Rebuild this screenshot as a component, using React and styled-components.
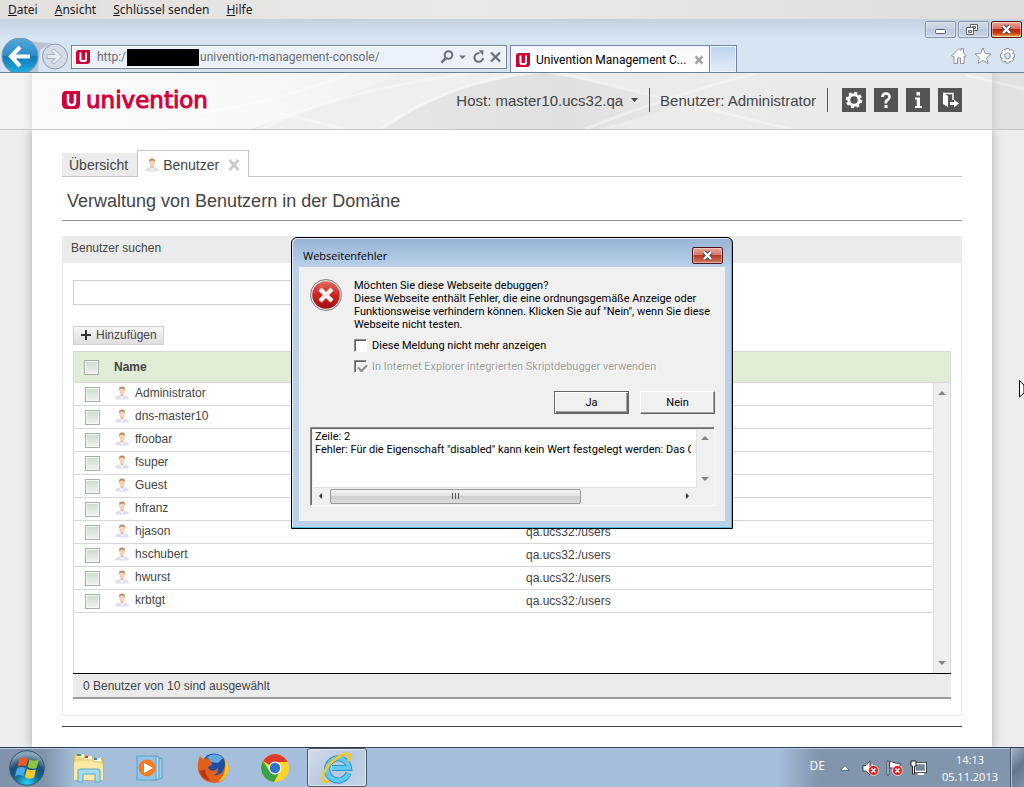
import React, { useState } from "react";
import styled, { createGlobalStyle } from "styled-components";

const users = [
  "Administrator",
  "dns-master10",
  "ffoobar",
  "fsuper",
  "Guest",
  "hfranz",
  "hjason",
  "hschubert",
  "hwurst",
  "krbtgt",
];

const errorText = 'Zeile: 2\nFehler: Für die Eigenschaft "disabled" kann kein Wert festgelegt werden: Das O';

function App() {
  return (
    <Screen>
      <GlobalStyle />
      <MenuBar />
      <BrowserChrome />
      <Viewport>
        <ConsoleHeader />
        <UserModule />
      </Viewport>
      <Taskbar />
      <Overlay>
        <ErrorDialog />
      </Overlay>
      <Cursor viewBox="0 0 5 18">
        <path d="M0.500 0.500V17L5 13V5Z" fill="#fff" stroke="#000" />
      </Cursor>
    </Screen>
  );
}

function MenuBar() {
  return (
    <Menu>
      {["Datei", "Ansicht", "Schlüssel senden", "Hilfe"].map((item) => (
        <MenuItem key={item}>
          <u>{item[0]}</u>
          {item.slice(1)}
        </MenuItem>
      ))}
    </Menu>
  );
}

function Favicon() {
  return (
    <svg width="14" height="14" viewBox="0 0 14 14">
      <path d="M3 0H14V11Q14 14 11 14H0V3Q0 0 3 0Z" fill="#cc0033" />
      <path d="M4.500 2.500V9.500Q4.500 11 6 11H8.500Q10 11 10 9.500V2.500" fill="none" stroke="#fff" strokeWidth="2" />
    </svg>
  );
}

function BrowserChrome() {
  return (
    <Chrome>
      <WindowButtons>
        <WindowButton aria-label="Minimieren">
          <svg width="31" height="15" viewBox="0 0 31 15">
            <rect x="10.500" y="7.500" width="10" height="4" rx="1" fill="#fff" stroke="#5a6068" />
          </svg>
        </WindowButton>
        <WindowButton aria-label="Wiederherstellen">
          <svg width="31" height="15" viewBox="0 0 31 15" fill="#fff" stroke="#5a6068">
            <path d="M12.500 2.500H19.500V8.500H12.500Z M14.500 4.500H17.500V6.500H14.500Z" fillRule="evenodd" />
            <path d="M8.500 5.500H15.500V12.500H8.500Z M10.500 8.500H13.500V10.500H10.500Z" fillRule="evenodd" />
          </svg>
        </WindowButton>
        <WindowButton $close aria-label="Schließen">
          <CloseGlyph />
        </WindowButton>
      </WindowButtons>
      <NavRow>
        <NavButton $width={40} aria-label="Zurück">
          <svg width="68" height="34" viewBox="0 0 68 34">
            <defs>
              <linearGradient id="back" x1="0" y1="0" x2="0" y2="1">
                <stop offset="0" stopColor="#55a8da" />
                <stop offset="0.480" stopColor="#2c8dca" />
                <stop offset="0.520" stopColor="#0f76b8" />
                <stop offset="1" stopColor="#22b4e4" />
              </linearGradient>
            </defs>
            <path d="M24 1Q34 5 52 5L40 12L38 34H30Z" fill="#b9c4d2" />
            <circle cx="20" cy="18" r="18" fill="url(#back)" stroke="#7f93a8" />
            <path d="M20 9L11 18.500L20 28M11 18.500H30" fill="none" stroke="#fff" strokeWidth="4" />
          </svg>
        </NavButton>
        <NavButton $width={31} aria-label="Vorwärts">
          <svg width="31" height="34" viewBox="0 0 31 34">
            <circle cx="15" cy="18.500" r="12.500" fill="#d3dce7" stroke="#8798ab" />
            <path
              d="M7 16.500H15L11.500 13L14 11L22 18.500L14 26L11.500 24L15 20.500H7Z"
              fill="#e9eef4"
              stroke="#a2afbd"
            />
          </svg>
        </NavButton>
        <AddressBar>
          <Favicon />
          <Url>
            http:/
            <Redacted />
            univention-management-console/
          </Url>
          <svg width="62" height="16" viewBox="0 0 62 16" fill="none" stroke="#6b6f76" strokeWidth="2">
            <circle cx="8.500" cy="6" r="3.800" />
            <path d="M6 9L1.500 13.500" strokeWidth="2.500" />
            <path d="M19 6.500H26L22.500 10Z" fill="#6b6f76" stroke="none" />
            <path d="M43 9A4.300 4.300 0 1 1 39.500 4.300" />
            <path d="M38.500 1L43.500 1.500L43 6.500Z" fill="#6b6f76" stroke="none" />
            <path d="M51 3.500L60 12.500M60 3.500L51 12.500" strokeWidth="2.200" />
          </svg>
        </AddressBar>
        <BrowserTab>
          <Favicon />
          <TabTitle>Univention Management C...</TabTitle>
          <svg width="10" height="10" viewBox="0 0 10 10">
            <path d="M1.500 1.500L8.500 8.500M8.500 1.500L1.500 8.500" stroke="#a3a3a3" strokeWidth="2.500" />
          </svg>
        </BrowserTab>
        <NewTab aria-label="Neue Registerkarte" />
        <ChromeTools>
          <svg width="66" height="18" viewBox="0 0 66 18" fill="#fff" stroke="#8d949d">
            <path d="M1.500 9L9 1.500L11 3.500V1.500H13.500V6L16.500 9L15 10.200L14 9.300V16.500H10.500V11H7.500V16.500H4V9.300L3 10.200Z" />
            <path d="M33 1L35.300 6.500L41 7L36.600 10.800L38 16.500L33 13.400L28 16.500L29.400 10.800L25 7L30.700 6.500Z" />
            <path d="M56 1.500H59L59.500 3.300L61.500 2.300L63.500 4.300L62.500 6.300L64.500 7V10.500L62.500 11L63.500 13L61.500 15L59.500 14.200L59 16H56L55.500 14.200L53.500 15L51.500 13L52.500 11L50.500 10.500V7L52.500 6.300L51.500 4.300L53.500 2.300L55.500 3.300Z" />
            <circle cx="57.500" cy="8.800" r="3" fill="#d6e3f1" />
          </svg>
        </ChromeTools>
      </NavRow>
    </Chrome>
  );
}

function CloseGlyph() {
  return (
    <svg width="13" height="11" viewBox="0 0 13 11">
      <path d="M3 2L10 9M10 2L3 9" stroke="#4b4a56" strokeWidth="4.500" />
      <path d="M3 2L10 9M10 2L3 9" stroke="#fff" strokeWidth="2.400" />
    </svg>
  );
}

function ConsoleHeader() {
  return (
    <Header>
      <HeaderBackdrop viewBox="0 0 1024 56" preserveAspectRatio="none">
        <defs>
          <linearGradient id="fade">
            <stop offset="0" stopColor="#fbfbfb" />
            <stop offset="0.250" stopColor="#f8f8f8" />
            <stop offset="0.500" stopColor="#ececec" />
            <stop offset="1" stopColor="#e9e9e9" />
          </linearGradient>
          <linearGradient id="slope">
            <stop offset="0" stopColor="#e6e6e6" />
            <stop offset="0.600" stopColor="#e0e0e0" />
            <stop offset="1" stopColor="#e9e9e9" />
          </linearGradient>
        </defs>
        <rect width="1024" height="56" fill="url(#fade)" />
        <path d="M250 56Q340 28 400 0H520Q450 22 385 56Z" fill="#efefef" />
        <path d="M385 56Q450 8 545 0Q620 12 690 30L600 56Z" fill="url(#slope)" />
        <path
          d="M200 40Q290 26 350 0M262 56Q330 20 470 0M380 56Q450 8 530 0M585 56Q670 22 757 0M280 40L345 56M560 0Q640 20 790 56M965 2L1024 16"
          fill="none"
          stroke="#fff"
          strokeOpacity="0.400"
          strokeWidth="3"
        />
      </HeaderBackdrop>
      <HeaderContent>
        <Logo href="#">
          <svg width="18" height="18" viewBox="0 0 18 18">
            <path d="M4 0H18V13Q18 18 13 18H5Q0 18 0 13V5Q0 0 4 0Z" fill="#d1003a" />
            <path d="M6 3V11Q6 14 9 14H10Q13 14 13 11V3" fill="none" stroke="#fff" strokeWidth="2.500" />
          </svg>
          univention
        </Logo>
        <HeaderItem>
          Host: master10.ucs32.qa
          <svg width="7" height="4" viewBox="0 0 7 4">
            <path d="M0 0H7L3.500 4Z" fill="#444" />
          </svg>
        </HeaderItem>
        <HeaderItem>Benutzer: Administrator</HeaderItem>
        <IconButton aria-label="Einstellungen">
          <svg width="24" height="24" viewBox="0 0 24 24">
            <circle cx="12" cy="12" r="5.200" fill="none" stroke="#fff" strokeWidth="3" />
            <circle cx="12" cy="12" r="7.200" fill="none" stroke="#fff" strokeWidth="2.200" strokeDasharray="3 2.655" />
          </svg>
        </IconButton>
        <IconButton aria-label="Hilfe">
          <svg width="24" height="24" viewBox="0 0 24 24">
            <path d="M8.500 9Q8.500 5.500 12 5.500T15.500 9Q15.500 11 13.500 12T12 15.500" fill="none" stroke="#fff" strokeWidth="2.600" />
            <rect x="10.500" y="17" width="3" height="3" fill="#fff" />
          </svg>
        </IconButton>
        <IconButton aria-label="Info">
          <svg width="24" height="24" viewBox="0 0 24 24" fill="#fff">
            <rect x="10.500" y="4" width="3.500" height="3.500" />
            <path d="M9 9.500H14V18H16V20H9V18H10.800V11.500H9Z" />
          </svg>
        </IconButton>
        <IconButton aria-label="Abmelden">
          <svg width="24" height="24" viewBox="0 0 24 24">
            <path d="M5 5L10 8V19L5 16Z" fill="#fff" />
            <path d="M5 5.500H15V12" fill="none" stroke="#fff" strokeWidth="1.500" />
            <path d="M12 14H16V11.500L21 15.500L16 19.500V17H12Z" fill="#fff" />
          </svg>
        </IconButton>
      </HeaderContent>
    </Header>
  );
}

function PersonIcon() {
  return (
    <svg width="14" height="14" viewBox="0 0 14 14">
      <path d="M0 13Q0 10.500 4 9.500L7 11L10 9.500Q14 10.500 14 13Q7 14.500 0 13Z" fill="#dcdff0" />
      <path d="M4.500 9.300L7 13L9.500 9.300Z" fill="#fff" />
      <path d="M5.500 7H8.500V9.500L7 11L5.500 9.500Z" fill="#e8b896" />
      <ellipse cx="7" cy="4.800" rx="2.700" ry="3.600" fill="#f6d3b6" />
      <path d="M4 4.800Q3.400 0.500 7 0.500T10 4.800L9.200 2.900Q7 2.300 4.800 2.900Z" fill="#b58a5f" />
    </svg>
  );
}

function UserModule() {
  return (
    <Main>
      <ModuleTabs>
        <ModuleTab>Übersicht</ModuleTab>
        <ModuleTab $active>
          <PersonIcon />
          Benutzer
          <svg width="12" height="12" viewBox="0 0 12 12">
            <path d="M1.500 1L10.500 11M10.500 1L1.500 11" stroke="#c9cbcd" strokeWidth="3" />
          </svg>
        </ModuleTab>
      </ModuleTabs>
      <ModuleTitle>Verwaltung von Benutzern in der Domäne</ModuleTitle>
      <Panel>
        <PanelTitle>Benutzer suchen</PanelTitle>
        <PanelBody>
          <SearchInput aria-label="Suche" />
          <AddButton>
            <svg width="10" height="10" viewBox="0 0 10 10">
              <path d="M5 0V10M0 5H10" stroke="#333" strokeWidth="2" />
            </svg>
            Hinzufügen
          </AddButton>
          <Grid>
            <UserTable>
              <colgroup>
                <col style={{ width: 40 }} />
                <col />
                <col style={{ width: 408 }} />
                <col style={{ width: 17 }} />
              </colgroup>
              <thead>
                <tr>
                  <th>
                    <GridCheck type="checkbox" aria-label="Alle auswählen" />
                  </th>
                  <th>Name</th>
                  <th>Position</th>
                  <th />
                </tr>
              </thead>
              <tbody>
                {users.map((name) => (
                  <tr key={name}>
                    <td>
                      <GridCheck type="checkbox" aria-label={name} />
                    </td>
                    <td>
                      <UserName>
                        <PersonIcon />
                        {name}
                      </UserName>
                    </td>
                    <td>qa.ucs32:/users</td>
                    <td />
                  </tr>
                ))}
              </tbody>
            </UserTable>
            <ScrollTrack>
              <Arrow />
              <Arrow $down />
            </ScrollTrack>
          </Grid>
          <GridStatus>0 Benutzer von 10 sind ausgewählt</GridStatus>
        </PanelBody>
      </Panel>
      <Divider />
    </Main>
  );
}

function Arrow({ $down }) {
  return (
    <svg width="8" height="4" viewBox="0 0 8 4">
      <path d={$down ? "M0 0H8L4 4Z" : "M0 4H8L4 0Z"} fill="#858585" />
    </svg>
  );
}

function ErrorDialog() {
  const [hide, setHide] = useState(false);

  return (
    <Dialog role="dialog" aria-label="Webseitenfehler">
      <DialogTitle>
        Webseitenfehler
        <DialogClose aria-label="Schließen">
          <CloseGlyph />
        </DialogClose>
      </DialogTitle>
      <DialogBody>
        <Message>
          <svg width="32" height="32" viewBox="0 0 32 32">
            <defs>
              <linearGradient id="error" x1="0" y1="0" x2="0" y2="1">
                <stop offset="0" stopColor="#e26a62" />
                <stop offset="0.500" stopColor="#cf2420" />
                <stop offset="1" stopColor="#a30c0c" />
              </linearGradient>
            </defs>
            <circle cx="16" cy="16" r="15.500" fill="#e8e8e8" stroke="#808080" />
            <circle cx="16" cy="16" r="13.800" fill="url(#error)" />
            <path d="M10 10L22 22M22 10L10 22" stroke="#f2f2f2" strokeWidth="4.500" />
          </svg>
          <div>
            Möchten Sie diese Webseite debuggen?
            <br />
            Diese Webseite enthält Fehler, die eine ordnungsgemäße Anzeige oder
            <br />
            Funktionsweise verhindern können. Klicken Sie auf "Nein", wenn Sie diese
            <br />
            Webseite nicht testen.
            <Option>
              <input type="checkbox" checked={hide} onChange={() => setHide(!hide)} />
              Diese Meldung nicht mehr anzeigen
            </Option>
            <Option $disabled>
              <input type="checkbox" checked disabled readOnly />
              In Internet Explorer integrierten Skriptdebugger verwenden
            </Option>
          </div>
        </Message>
        <DialogActions>
          <DialogButton $primary>Ja</DialogButton>
          <DialogButton>Nein</DialogButton>
        </DialogActions>
        <Details>
          <DetailsText readOnly wrap="off" aria-label="Details" value={errorText} />
          <DetailsTrack>
            <Arrow />
            <Arrow $down />
          </DetailsTrack>
          <DetailsBar>
            <svg width="4" height="8" viewBox="0 0 4 8">
              <path d="M4 1V7L1 4Z" fill="#333" />
            </svg>
            <Thumb>
              <svg width="9" height="6" viewBox="0 0 9 6">
                <path d="M1.500 0V6M4.500 0V6M7.500 0V6" stroke="#555" />
              </svg>
            </Thumb>
            <svg width="4" height="8" viewBox="0 0 4 8">
              <path d="M0 1V7L3 4Z" fill="#333" />
            </svg>
          </DetailsBar>
        </Details>
      </DialogBody>
    </Dialog>
  );
}

function Taskbar() {
  return (
    <Bar>
      <StartButton aria-label="Start">
        <svg width="36" height="36" viewBox="0 0 36 36">
          <defs>
            <radialGradient id="orb" cx="0.500" cy="0.950" r="0.850">
              <stop offset="0" stopColor="#25d3f5" />
              <stop offset="0.450" stopColor="#12658f" />
              <stop offset="0.700" stopColor="#1c4c70" />
              <stop offset="1" stopColor="#8aa6bd" />
            </radialGradient>
          </defs>
          <circle cx="18" cy="18" r="17.300" fill="url(#orb)" stroke="#31546f" />
          <path d="M10.500 9Q14 6 19 8.500L17 16.500Q12.500 14.500 8.500 17Z" fill="#ee5a24" />
          <path d="M20.500 9.300Q25 12 30 9.500L27.500 18Q23 20 18.500 17Z" fill="#8cc63f" />
          <path d="M8 18.500Q12 16 16.500 18L14.500 26Q10 24 6 26.500Z" fill="#4aa9e9" />
          <path d="M18 18.700Q22.500 21.500 27 19.500L25 27.500Q20 30 16 27Z" fill="#fdc82f" />
        </svg>
      </StartButton>
      <TaskButton aria-label="Explorer">
        <svg width="34" height="32" viewBox="0 0 34 32">
          <path d="M2 3H14V5H22V7H31V28H2Z" fill="#eed887" stroke="#c9a94f" />
          <path d="M2 10L14 9L31 12V28H2Z" fill="#fbe9a5" />
          <path d="M5 2H12V5H5Z" fill="#fff" />
          <path d="M5 2H9V4H5Z" fill="#35a853" />
          <path d="M13 4H20V7H13Z" fill="#fff" />
          <path d="M13 4H16V6H13Z" fill="#d83b2a" />
          <path d="M22 6H29V9H22Z" fill="#fff" />
          <path d="M22 6H25V8H22Z" fill="#2b8ad6" />
          <path d="M6 30V19Q6 17 8 17H26Q28 17 28 19V30H23V22H11V30Z" fill="#a4dcef" stroke="#5ba7c9" />
        </svg>
      </TaskButton>
      <TaskButton aria-label="Media Player">
        <svg width="30" height="28" viewBox="0 0 30 28">
          <path d="M20 3L26 5V24L20 26Z" fill="#9fd0ec" stroke="#5e9dc6" />
          <path d="M18 2L23 3V25L18 26Z" fill="#b6ddf2" stroke="#5e9dc6" />
          <rect x="1" y="2" width="19" height="24" fill="#8ec6e7" stroke="#5e9dc6" />
          <circle cx="11" cy="14" r="8.500" fill="#f47b20" />
          <path d="M8 9L17 14L8 19Z" fill="#fff" />
        </svg>
      </TaskButton>
      <TaskButton aria-label="Firefox">
        <svg width="32" height="32" viewBox="0 0 32 32">
          <circle cx="17" cy="14" r="12.500" fill="#1f4fa0" />
          <path d="M10 5Q18 -1 26 6L21 11L14 10Z" fill="#5fa8e0" />
          <path d="M3 4Q5 8 9 6Q15 8 15 13L12 14Q10 16 13 18Q18 20 21 16Q22 21 17 23Q24 24 27 17Q29 12 27 6Q34 14 31 21Q27 31 17 31Q4 30 1 18Q0 10 3 4Z" fill="#e0601c" />
          <path d="M27 6Q34 14 31 21Q28 28 21 30Q28 23 28 16Q29 11 27 6Z" fill="#fbc62c" />
          <path d="M2 18Q4 27 14 29Q8 24 8 17Q5 20 2 18Z" fill="#b83310" />
        </svg>
      </TaskButton>
      <TaskButton aria-label="Chrome">
        <svg width="30" height="30" viewBox="0 0 30 30">
          <circle cx="15" cy="15" r="14" fill="#fdd428" />
          <path d="M2.900 8A14 14 0 0 1 27.100 8L27.500 9H15L9.500 12Z" fill="#dc3b2c" />
          <path d="M2.900 8A14 14 0 0 0 14 29L20 18L9.500 18Z" fill="#3ba14a" />
          <circle cx="15" cy="15" r="6.500" fill="#fff" />
          <circle cx="15" cy="15" r="5.200" fill="#2f72c9" />
        </svg>
      </TaskButton>
      <TaskButton $active aria-label="Internet Explorer">
        <svg width="34" height="32" viewBox="0 0 34 32">
          <path d="M28.500 21A11 11 0 1 1 29 16H12" fill="none" stroke="#1f7fc0" strokeWidth="6" />
          <path d="M28.500 21A11 11 0 1 1 29 16H12" fill="none" stroke="#5ccaf4" strokeWidth="4.500" />
          <path d="M9 29Q1 32 3 24Q7 12 17 6Q28 -1 30 4Q30 7 28 9" fill="none" stroke="#f4c52c" strokeWidth="2.800" />
        </svg>
      </TaskButton>
      <Tray>
        <Language>DE</Language>
        <svg width="10" height="6" viewBox="0 0 10 6">
          <path d="M0.500 5.500L5 0.500L9.500 5.500Z" fill="#fff" stroke="#5b6b7d" />
        </svg>
        <TrayIcon viewBox="0 0 17 16">
          <path d="M1 5.500H4L8 1V15L4 11H1Z" fill="#fff" stroke="#3b4652" />
          <path d="M10 4Q12 8 10 12" fill="none" stroke="#fff" />
          <ErrorBadge />
        </TrayIcon>
        <TrayIcon viewBox="0 0 17 16">
          <path d="M1 1H3V15H1Z" fill="#fff" stroke="#3b4652" />
          <path d="M3.500 2Q6 1 8 2.500T14 3V9Q11 10 8 8.500T3.500 8.500Z" fill="#fff" stroke="#3b4652" />
          <ErrorBadge />
        </TrayIcon>
        <TrayIcon viewBox="0 0 17 16">
          <path d="M5 3.500H15.500V11.500H5Z" fill="#7187a0" stroke="#222" strokeWidth="3" />
          <path d="M5 3.500H15.500V11.500H5Z" fill="#7187a0" stroke="#fff" strokeWidth="1.300" />
          <path d="M8 14H14" stroke="#fff" strokeWidth="2" />
          <path d="M1 1H6V6H4.500V14H2.500V6H1Z" fill="#fff" stroke="#222" />
        </TrayIcon>
        <Clock>
          14:13
          <br />
          05.11.2013
        </Clock>
        <ShowDesktop aria-label="Desktop anzeigen" />
      </Tray>
    </Bar>
  );
}

function ErrorBadge() {
  return (
    <g>
      <circle cx="11.500" cy="10.500" r="5" fill="#d8231f" stroke="#fff" strokeWidth="0.700" />
      <path d="M9.500 8.500L13.500 12.500M13.500 8.500L9.500 12.500" stroke="#fff" strokeWidth="1.500" />
    </g>
  );
}

const GlobalStyle = createGlobalStyle`
  * {
    box-sizing: border-box;
  }

  body {
    margin: 0;
    font-family: "Liberation Sans", Arial, sans-serif;
    font-size: 12px;
    color: #444;
  }

  button, input, textarea {
    font: inherit;
    color: inherit;
    margin: 0;
    padding: 0;
  }

  svg {
    flex: none;
    display: block;
  }
`;

const Screen = styled.div`
  position: relative;
  display: flex;
  flex-direction: column;
  min-height: 100vh;
  overflow: hidden;
`;

const Menu = styled.nav`
  display: flex;
  align-items: center;
  gap: 17px;
  height: 19px;
  padding: 0 8px;
  background: linear-gradient(90deg, #e2dfdd, #ebe9e7 45%, #e0dcda);
  font-family: "Noto Sans", sans-serif;
  font-size: 12px;
  color: #1a1a1a;
`;

const MenuItem = styled.span`
  white-space: nowrap;
`;

const Chrome = styled.div`
  height: 54px;
  padding-top: 2px;
  background: linear-gradient(#c3d2e2, #d7e4f2 20px);
  border-bottom: 1px solid #6c8099;
`;

const WindowButtons = styled.div`
  display: flex;
  justify-content: flex-end;
  gap: 2px;
  padding-right: 2px;
`;

const WindowButton = styled.button`
  display: flex;
  align-items: center;
  justify-content: center;
  width: 31px;
  height: 17px;
  border: 1px solid ${(props) => (props.$close ? "#5e1414" : "#8292ab")};
  border-radius: 2px;
  box-shadow: inset 0 0 0 1px rgba(255, 255, 255, 0.45);
  background: ${(props) =>
    props.$close
      ? "linear-gradient(#eda79a, #dc6a55 45%, #c01f08 50%, #cf3a10 75%, #f0c060)"
      : "linear-gradient(#cfdbe9, #c3d0e0 45%, #b9c8da 50%, #cbd9e8)"};
`;

const NavRow = styled.div`
  display: flex;
  align-items: flex-end;
  height: 34px;
`;

const NavButton = styled.button`
  width: ${(props) => props.$width}px;
  height: 34px;
  border: 0;
  background: none;
`;

const AddressBar = styled.div`
  display: flex;
  flex: 1;
  align-items: center;
  height: 24px;
  margin: 0 3px 3px 0;
  padding: 0 4px;
  border: 1px solid #74859b;
  box-shadow: inset 0 0 0 1px #fff;
  background: #eaf1fa;
`;

const Url = styled.div`
  display: flex;
  flex: 1;
  align-items: center;
  margin-left: 7px;
  color: #6d6d6d;
  font-family: Roboto, sans-serif;
  white-space: nowrap;
`;

const Redacted = styled.span`
  width: 72px;
  height: 17px;
  margin: 0 1px;
  background: #000;
`;

const BrowserTab = styled.div`
  display: flex;
  align-items: center;
  gap: 6px;
  width: 200px;
  height: 27px;
  padding: 2px 5px 0;
  border: 1px solid #74859b;
  border-bottom: 0;
  background: linear-gradient(#f4f8fc, #fff 60%);
  color: #000;
  font-family: Roboto, sans-serif;
`;

const TabTitle = styled.span`
  flex: 1;
  white-space: nowrap;
`;

const NewTab = styled.button`
  width: 27px;
  height: 27px;
  border: 1px solid #74859b;
  border-width: 1px 1px 0 0;
  box-shadow: inset 0 0 0 1px #eef4fb;
  background: linear-gradient(#bcd3ed, #e3edf9);
`;

const ChromeTools = styled.div`
  display: flex;
  justify-content: flex-end;
  width: 287px;
  padding: 0 8px 7px 0;
`;

const Viewport = styled.div`
  display: flex;
  flex: 1;
  flex-direction: column;
  background: #ededed;
  overflow: hidden;
`;

const Header = styled.header`
  position: relative;
  z-index: 1;
  display: grid;
  height: 57px;
  border-bottom: 1px solid #c6c6c6;
  overflow: hidden;

  > * {
    grid-area: 1 / 1;
  }
`;

const HeaderBackdrop = styled.svg`
  width: 100%;
  height: 56px;
`;

const HeaderContent = styled.div`
  display: flex;
  align-items: center;
  gap: 10px;
  margin: 0 32px;
  padding: 0 30px 2px;
  box-shadow: 0 0 10px rgba(0, 0, 0, 0.15), 0 0 0 40px rgba(0, 0, 0, 0.03);
  color: #444;
  font-size: 15px;
`;

const Logo = styled.a`
  display: flex;
  align-items: center;
  gap: 6px;
  margin-right: auto;
  color: #d1003a;
  font-family: "DejaVu Sans", sans-serif;
  font-size: 23px;
  line-height: 24px;
  text-decoration: none;
  -webkit-text-stroke: 1px #d1003a;
`;

const HeaderItem = styled.div`
  display: flex;
  align-items: center;
  gap: 8px;
  height: 24px;
  padding-right: 11px;
  border-right: 1px solid #555;
  white-space: nowrap;
`;

const IconButton = styled.button`
  width: 24px;
  height: 24px;
  border: 0;
  background: #545456;

  ${HeaderItem} + & {
    margin-left: 4px;
  }

  & + & {
    margin-left: -2px;
  }
`;

const Main = styled.main`
  flex: 1;
  margin: 0 32px;
  padding: 20px 30px;
  background: #fff;
  box-shadow: 0 0 10px rgba(0, 0, 0, 0.3);
`;

const ModuleTabs = styled.div`
  display: flex;
  align-items: flex-end;
  height: 27px;
  border-bottom: 1px solid #c4c4c4;
`;

const ModuleTab = styled.button`
  display: flex;
  align-items: center;
  gap: 4px;
  height: ${(props) => (props.$active ? 27 : 23)}px;
  margin-bottom: ${(props) => (props.$active ? -1 : 0)}px;
  padding: ${(props) => (props.$active ? "2px 8px 0 7px" : "0 9px 0 7px")};
  border: ${(props) => (props.$active ? "1px solid #c4c4c4" : "0")};
  border-bottom: 0;
  background: ${(props) => (props.$active ? "#fff" : "#ebebeb")};
  font-size: 14px;

  svg:last-child:not(:first-child) {
    margin-left: 5px;
  }
`;

const ModuleTitle = styled.h1`
  height: 44px;
  margin: 0 0 15px;
  padding-left: 5px;
  border-bottom: 1px solid #8f8f8f;
  font-size: 18px;
  font-weight: normal;
  line-height: 48px;
`;

const Panel = styled.section`
  border: 1px solid #ebebeb;
`;

const PanelTitle = styled.h2`
  height: 26px;
  margin: 0;
  padding-left: 8px;
  background: #ebebeb;
  font-size: 12px;
  font-weight: normal;
  line-height: 22px;
`;

const PanelBody = styled.div`
  padding: 17px 10px 16px;
`;

const SearchInput = styled.input`
  display: block;
  width: 50%;
  height: 25px;
  margin-bottom: 21px;
  border: 1px solid #d0d0d0;
`;

const AddButton = styled.button`
  display: flex;
  align-items: center;
  gap: 5px;
  height: 19px;
  margin-bottom: 6px;
  padding: 0 6px 2px 7px;
  border: 1px solid #cfcfcf;
  background: linear-gradient(#f6f6f6, #dedede);
`;

const Grid = styled.div`
  display: grid;
  grid-template: 31px 1fr / 1fr 17px;
  min-height: 322px;
  border: 1px solid #d6d6d6;
  border-bottom: 0;
`;

const UserTable = styled.table`
  grid-area: 1 / 1 / 3 / 3;
  align-self: start;
  width: 100%;
  table-layout: fixed;
  border-spacing: 0;

  th {
    height: 31px;
    padding: 0;
    border-bottom: 1px solid #d6d6d6;
    background: #e0edd6;
    text-align: left;
  }

  td {
    height: 23px;
    padding: 0 0 2px;
    border-bottom: 1px solid #d6d6d6;
  }

  td:first-child,
  td:nth-child(3) {
    padding: 0 0 0 1px;
  }

  td:last-child {
    border: 0;
  }
`;

const GridCheck = styled.input`
  appearance: none;
  display: block;
  width: 15px;
  height: 15px;
  margin-left: 10px;
  border: 1px solid #a3b3a3;
  box-shadow: inset 0 0 0 1px #f4f7f4;
  background: linear-gradient(#cbdacb, #f2f2f2);
`;

const UserName = styled.span`
  display: flex;
  align-items: center;
  gap: 6px;
  padding-left: 1px;
`;

const ScrollTrack = styled.div`
  display: flex;
  flex-direction: column;
  align-items: center;
  justify-content: space-between;
  grid-area: 2 / 2;
  padding: 8px 0;
  border-left: 1px solid #dedede;
  background: #efefef;
`;

const GridStatus = styled.div`
  height: 26px;
  padding-left: 10px;
  border-top: 1px solid #000;
  border-bottom: 2px solid #9a9a9a;
  background: #ebebeb;
  line-height: 24px;
`;

const Divider = styled.hr`
  height: 1px;
  margin: 10px 0 0;
  border: 0;
  background: #444;
`;

const Overlay = styled.div`
  position: absolute;
  inset: 0;
  z-index: 2;
  display: flex;
  align-items: flex-start;
  justify-content: center;
  padding-top: 237px;
`;

const Dialog = styled.div`
  width: 442px;
  padding: 0 7px 7px;
  border: 1px solid #000;
  border-radius: 6px 6px 0 0;
  box-shadow: inset -1px -1px #45bede, inset 1px 1px #dfeaf6;
  background: linear-gradient(#98b4d3, #b9d1ea 30px);
  font-family: Roboto, sans-serif;
  font-size: 11px;
  line-height: 13px;
  color: #000;
`;

const DialogTitle = styled.div`
  display: flex;
  align-items: center;
  justify-content: space-between;
  height: 29px;
  padding: 6px 2px 0 4px;
  font-family: "Open Sans", sans-serif;
`;

const DialogClose = styled.button`
  display: flex;
  align-items: center;
  justify-content: center;
  width: 31px;
  height: 17px;
  border: 1px solid #4d1520;
  border-radius: 2px;
  box-shadow: inset 0 0 0 1px rgba(255, 255, 255, 0.4);
  background: linear-gradient(#e5a79c, #d67a68 45%, #b93a20 50%, #cf7a60);
`;

const DialogBody = styled.div`
  height: 254px;
  padding: 12px 10px 0 11px;
  background: #f0f0f0;
`;

const Message = styled.div`
  display: flex;
  gap: 12px;
  white-space: nowrap;
`;

const Option = styled.label`
  display: flex;
  align-items: center;
  gap: 5px;
  height: 13px;
  margin-top: 8px;
  color: ${(props) => (props.$disabled ? "#9d9d9d" : "#000")};
  text-shadow: ${(props) => (props.$disabled ? "1px 1px #fff" : "none")};

  input {
    appearance: none;
    width: 13px;
    height: 13px;
    border: 1px solid;
    border-color: #8a8a8a #fff #fff #8a8a8a;
    box-shadow: inset 1px 1px #5f5f5f;
    background: ${(props) => (props.$disabled ? "#f0f0f0" : "#fff")};
  }

  input:checked::before {
    content: "";
    display: block;
    width: 7px;
    height: 4px;
    margin: 3px 0 0 3px;
    border: 2px solid #8a8a8a;
    border-width: 0 0 2px 2px;
    transform: rotate(-45deg);
  }
`;

const DialogActions = styled.div`
  display: flex;
  justify-content: flex-end;
  gap: 11px;
  margin: 18px 0 13px;
`;

const DialogButton = styled.button`
  width: 75px;
  height: 23px;
  border: 1px solid;
  border-color: ${(props) => (props.$primary ? "#646464" : "#fff #646464 #646464 #fff")};
  box-shadow: ${(props) =>
    props.$primary
      ? "inset 1px 1px #fff, inset -1px -1px #696969, inset -2px -2px #a0a0a0"
      : "inset -1px -1px #a0a0a0"};
  background: #f0f0f0;
`;

const Details = styled.div`
  display: grid;
  grid-template: 1fr 17px / 1fr 17px;
  height: 79px;
  border: 1px solid;
  border-color: #8a8a8a #fff #fff #8a8a8a;
  box-shadow: inset 1px 1px #696969;
  padding: 2px 1px 1px 2px;
  background: #f0f0f0;
`;

const DetailsText = styled.textarea`
  display: block;
  width: 100%;
  height: 100%;
  padding: 0 0 0 2px;
  border: 0;
  border-right: 5px solid #fff;
  background: #fff;
  overflow: hidden;
  resize: none;
  outline: 0;
`;

const DetailsTrack = styled.div`
  display: flex;
  flex-direction: column;
  align-items: center;
  justify-content: space-between;
  padding: 6px 0;
  border-left: 1px solid #e3e3e3;
`;

const DetailsBar = styled.div`
  display: flex;
  align-items: center;
  padding: 0 6px 0 5px;
  border-top: 1px solid #e3e3e3;

  svg:last-child {
    margin-left: auto;
  }
`;

const Thumb = styled.div`
  display: flex;
  align-items: center;
  justify-content: center;
  width: 251px;
  height: 15px;
  margin-left: 8px;
  border: 1px solid #979797;
  border-radius: 2px;
  background: linear-gradient(#f3f3f3, #e2e2e2 45%, #cfcfcf 50%, #dcdcdc);

  && svg {
    margin: 0;
  }
`;

const Cursor = styled.svg`
  position: absolute;
  top: 380px;
  right: 0;
  width: 5px;
  height: 18px;
`;

const Bar = styled.footer`
  display: flex;
  height: 40px;
  border-top: 1px solid #33404f;
  box-shadow: inset 0 1px #b5c8dd;
  background: linear-gradient(90deg, #8093aa, #8093aa 44px, #a5bedc 76px, #a5bedc 76%, #8195ad 80%, #8195ad);
  font-family: "Open Sans", sans-serif;
  color: #fff;
`;

const TaskButton = styled.button`
  display: flex;
  align-items: center;
  justify-content: center;
  width: 60px;
  height: 39px;
  margin-right: 2px;
  border: ${(props) => (props.$active ? "1px solid #4b5868" : "0")};
  border-radius: 3px;
  box-shadow: ${(props) => (props.$active ? "inset 0 0 0 1px #dfe8f3" : "none")};
  background: ${(props) => (props.$active ? "linear-gradient(135deg, #d3deec, #b7c9e0 50%, #c3d4e8)" : "none")};
`;

const StartButton = styled(TaskButton)`
  width: 54px;
  margin-right: 5px;
`;

const Tray = styled.div`
  display: flex;
  align-items: center;
  gap: 8px;
  margin-left: auto;
`;

const Language = styled.span`
  margin: 0 7px 5px 0;
`;

const TrayIcon = styled.svg`
  width: 17px;
  height: 16px;

  svg + & {
    margin-left: 4px;
  }

  & + & {
    margin-left: -1px;
  }
`;

const Clock = styled.time`
  margin: 0 4px 0 7px;
  font-size: 11px;
  line-height: 17px;
  text-align: center;
`;

const ShowDesktop = styled.button`
  width: 14px;
  height: 39px;
  border: 1px solid #48566a;
  border-width: 0 0 0 1px;
  box-shadow: inset 1px 0 #b3c1d1;
  background: linear-gradient(135deg, #a5b4c6, #66788e 50%, #7d90a8);
`;

export default App;
